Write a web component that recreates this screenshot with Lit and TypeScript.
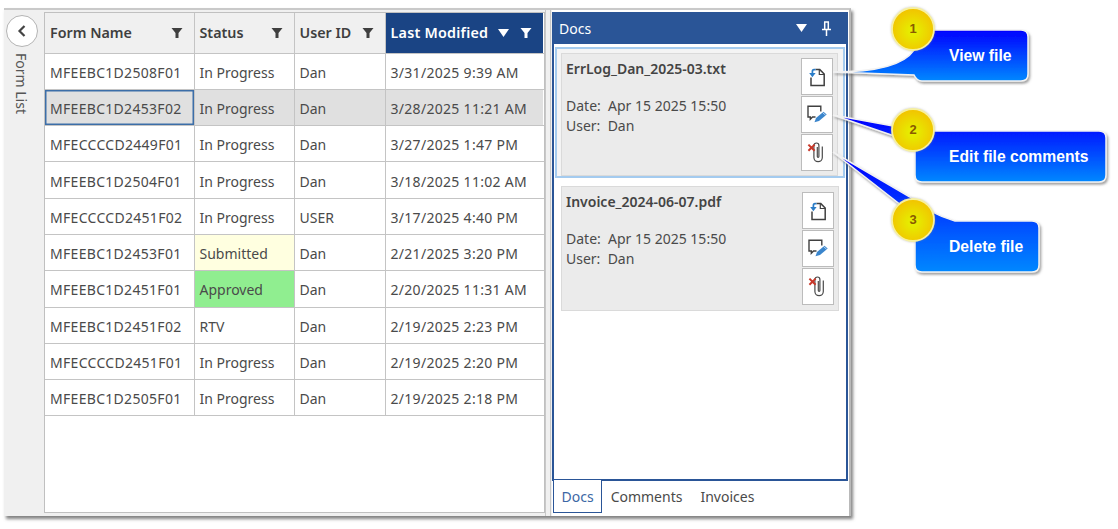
import { LitElement, html, css, svg } from "lit";
import { customElement } from "lit/decorators.js";

const rows = [
  ["MFEEBC1D2508F01", "In Progress", "Dan", "3/31/2025 9:39 AM"],
  ["MFEEBC1D2453F02", "In Progress", "Dan", "3/28/2025 11:21 AM"],
  ["MFECCCCD2449F01", "In Progress", "Dan", "3/27/2025 1:47 PM"],
  ["MFEEBC1D2504F01", "In Progress", "Dan", "3/18/2025 11:02 AM"],
  ["MFECCCCD2451F02", "In Progress", "USER", "3/17/2025 4:40 PM"],
  ["MFEEBC1D2453F01", "Submitted", "Dan", "2/21/2025 3:20 PM"],
  ["MFEEBC1D2451F01", "Approved", "Dan", "2/20/2025 11:31 AM"],
  ["MFEEBC1D2451F02", "RTV", "Dan", "2/19/2025 2:23 PM"],
  ["MFECCCCD2451F01", "In Progress", "Dan", "2/19/2025 2:20 PM"],
  ["MFEEBC1D2505F01", "In Progress", "Dan", "2/19/2025 2:18 PM"],
];

const funnel = html`<svg class="funnel" viewBox="0 0 12 12" width="12" height="12"><path d="M.5 1h11L7.5 6v5h-3V6z" fill="currentColor"/></svg>`;

const viewIcon = html`<svg viewBox="0 0 24 24" width="24" height="24" fill="none">
  <path d="M10.500 4.600h4.300l4.400 4.400v11.500H6v-8" stroke="#404040" stroke-width="1.500"/>
  <path d="M14.300 4.600V9.500h4.900" stroke="#404040" stroke-width="1.200"/>
  <path d="M10.500 4.700H9Q7.400 4.700 7.400 6.500v2" stroke="#2a7cc7" stroke-width="1.700"/>
  <path d="M4.200 8h6.400L7.400 12.300z" fill="#2a7cc7"/>
</svg>`;
const editIcon = html`<svg viewBox="0 0 24 24" width="24" height="24" fill="none">
  <path d="M10.500 14H7.500L5.300 16.300V14H3V3.300h12.800V8.500" stroke="#404040" stroke-width="1.400"/>
  <path d="M9.500 19.300L11 15L18.500 8.800L21.700 11.500L14 17.900z" fill="#3a85cc"/>
  <path d="M17.600 9.600l3.100 2.700" stroke="#d4e6f6" stroke-width=".8"/>
</svg>`;
const delIcon = html`<svg viewBox="0 0 24 24" width="24" height="24" fill="none">
  <path d="M17.300 5.500V16.500a4.200 4.200 0 0 1-8.400 0V4.500a2.500 2.500 0 0 1 5 0V15.500a.8.8 0 0 1-1.600 0V6" stroke="#4a4a4a" stroke-width="1.200"/>
  <path d="M3.400 3.600l6.200 6.200M9.600 3.600l-6.200 6.200" stroke="#c8382a" stroke-width="2"/>
</svg>`;

const cards = [
  { name: "ErrLog_Dan_2025-03.txt", sel: true },
  { name: "Invoice_2024-06-07.pdf", sel: false },
];

@customElement("app-root")
export class AppRoot extends LitElement {
  static styles = css`
    :host {
      display: block;
      position: relative;
      width: 1118px;
      height: 529px;
      overflow: hidden;
      background: #fff;
      font-family: "Noto Sans", sans-serif;
      font-size: 14px;
      color: #4a4a4a;
    }
    .window {
      margin: 8px 0 0 4px;
      width: 847px;
      height: 508px;
      box-sizing: border-box;
      display: flex;
      background: #f0f0f0;
      border-top: 2px solid #c9c9c9;
      border-right: 2px solid #b9b9b9;
      box-shadow: 2px 3px 3px rgba(90, 90, 90, 0.75);
    }
    .side {
      width: 40px;
      flex: none;
      display: flex;
      flex-direction: column;
      align-items: center;
      padding-top: 5px;
      box-sizing: border-box;
    }
    .back {
      width: 32px;
      height: 32px;
      box-sizing: border-box;
      margin-left: -4px;
      border-radius: 50%;
      border: 1.500px solid #b4b4b4;
      background: #fff;
      display: flex;
      align-items: center;
      justify-content: center;
    }
    .vert {
      writing-mode: vertical-rl;
      margin: 6px 0 0 -6px;
      font-size: 14px;
      color: #555;
      line-height: 18px;
    }
    .grid {
      width: 501px;
      flex: none;
      box-sizing: border-box;
      margin: 2px 0 3px;
      border: 1.500px solid #c0c0c0;
      background: #fff;
    }
    .row {
      display: grid;
      grid-template-columns: 149.500px 100px 91px 157.500px;
      height: 36.300px;
      box-sizing: border-box;
      border-bottom: 1.500px solid #c4c4c4;
    }
    .row.head {
      height: 40.500px;
    }
    .cell {
      display: flex;
      align-items: center;
      padding: 2px 0 0 5px;
      box-sizing: border-box;
      border-right: 1.500px solid #c4c4c4;
      white-space: nowrap;
    }
    .cell.num-text {
      letter-spacing: 0.3px;
    }
    .cell:last-child {
      border-right: none;
    }
    .head .cell {
      background: #f0f0f0;
      font-weight: 600;
      font-size: 14.300px;
      justify-content: space-between;
      padding: 0 11px 0 5px;
      color: #3f3f3f;
    }
    .head .cell.sorted {
      background: #1a4484;
      color: #fff;
      padding-right: 11px;
      letter-spacing: 0.25px;
    }
    .tools {
      display: flex;
      align-items: center;
      gap: 11px;
    }
    .sel .cell {
      background: #e0e0e0;
    }
    .sel .cell.focus {
      box-shadow: inset 0 0 0 1.500px #3c6ea8;
    }
    .submitted {
      background: #ffffe0;
    }
    .approved {
      background: #90ee90;
    }
    .split {
      width: 6px;
      flex: none;
      box-sizing: border-box;
      border-left: 1.500px solid #c8c8c8;
      border-right: 1.500px solid #c8c8c8;
      margin-right: 1px;
    }
    .panel {
      flex: 1;
      min-width: 0;
      background: #fff;
      display: flex;
      flex-direction: column;
      padding: 2px 1px 3px 0;
    }
    .dock {
      height: 469px;
      flex: none;
      box-sizing: border-box;
      border: 2px solid #2a5597;
      display: flex;
      flex-direction: column;
      background: #fff;
    }
    .title {
      height: 30px;
      flex: none;
      background: #2a5597;
      color: #fff;
      display: flex;
      align-items: center;
      justify-content: space-between;
      padding: 0 14px 2px 5px;
      box-sizing: border-box;
    }
    .title .right {
      display: flex;
      align-items: center;
      gap: 14px;
    }
    .card {
      margin: 3px 1px 8px 1px;
      padding: 4px 5px 0 4px;
      height: 131px;
      box-sizing: border-box;
      border: 2px solid #a4cbef;
      background: #f4f4f4;
    }
    .inner {
      height: 100%;
      box-sizing: border-box;
      background: #ebebeb;
      border: 1.500px solid #dadada;
      display: flex;
      justify-content: space-between;
      padding: 4px 4px 0 4px;
    }
    .card.plain {
      height: 125px;
      border: none;
      background: none;
      margin: 0 7px;
      padding: 0;
    }
    .plain .inner {
      padding-top: 5px;
    }
    .info {
      display: flex;
      flex-direction: column;
    }
    .sel .info {
      padding-top: 1px;
    }
    .plain .info {
      margin-top: -0.500px;
    }
    .fname {
      font-weight: 600;
      line-height: 20px;
      color: #444;
    }
    .meta {
      margin-top: 17px;
      line-height: 20px;
    }
    .btns {
      display: flex;
      flex-direction: column;
      gap: 1px;
    }
    .btn {
      width: 32px;
      height: 37px;
      box-sizing: border-box;
      background: #fff;
      border: 1.500px solid #bcbcbc;
      display: flex;
      align-items: center;
      justify-content: center;
    }
    .tabs {
      display: flex;
      align-items: stretch;
      height: 34px;
      margin-top: -1.500px;
    }
    .tab {
      display: flex;
      align-items: center;
      padding: 1px 8.500px 0;
      white-space: nowrap;
    }
    .tab:last-child {
      margin-left: 1px;
    }
    .tab.on {
      padding: 1px 7.500px 0;
      margin-left: 1px;
      color: #3c67a5;
      background: #fff;
      border: 1.500px solid #2a5597;
      border-top: none;
    }
    .overlay {
      position: absolute;
      left: 0;
      top: 0;
      pointer-events: none;
    }
    .co {
      position: absolute;
      left: 949px;
      font: bold 15.700px "Liberation Sans", sans-serif;
      color: #fff;
      line-height: 16px;
      white-space: nowrap;
    }
    .num {
      position: absolute;
      width: 40px;
      left: 893px;
      text-align: center;
      font: bold 13px "Liberation Sans", sans-serif;
      color: #8a5a00;
      line-height: 14px;
    }
  `;

  private callout(d: string, id: string) {
    return svg`<path d=${d} fill="url(#${id})" stroke="#f2f2f2" stroke-width="1.500" filter="url(#sh)"/>`;
  }
  private badge(cy: number) {
    return svg`<circle cx="913" cy=${cy} r="21" fill="url(#gold)" stroke="#f6f0a0" stroke-width="1.800" filter="url(#sh2)"/>`;
  }

  render() {
    return html`
      <div class="window">
        <div class="side">
          <div class="back">
            <svg width="12" height="14" viewBox="0 0 12 14"><path d="M8.500 2L3.500 7l5 5" fill="none" stroke="#444" stroke-width="2.200"/></svg>
          </div>
          <div class="vert">Form List</div>
        </div>
        <div class="grid">
          <div class="row head">
            <div class="cell">Form Name ${funnel}</div>
            <div class="cell">Status ${funnel}</div>
            <div class="cell">User ID ${funnel}</div>
            <div class="cell sorted">Last Modified
              <span class="tools">
                <svg width="11" height="8" viewBox="0 0 11 8"><path d="M0 0h11L5.500 8z" fill="#fff"/></svg>
                ${funnel}
              </span>
            </div>
          </div>
          ${rows.map(
            (r, i) => html`<div class="row ${i === 1 ? "sel" : ""}">
              <div class="cell num-text ${i === 1 ? "focus" : ""}">${r[0]}</div>
              <div class="cell ${r[1] === "Submitted" ? "submitted" : r[1] === "Approved" ? "approved" : ""}">${r[1]}</div>
              <div class="cell">${r[2]}</div>
              <div class="cell num-text">${r[3]}</div>
            </div>`
          )}
        </div>
        <div class="split"></div>
        <div class="panel">
          <div class="dock">
            <div class="title">
              <span>Docs</span>
              <span class="right">
                <svg width="11" height="8" viewBox="0 0 11 8"><path d="M0 0h11L5.500 8z" fill="#fff"/></svg>
                <svg width="11" height="15" viewBox="0 0 11 15"><path d="M3 1h5M3.700 1v7M7.300 1v7M1 8.500h9M5.500 9v6" fill="none" stroke="#fff" stroke-width="1.500"/></svg>
              </span>
            </div>
            ${cards.map(
              (c) => html`<div class="card ${c.sel ? "sel" : "plain"}">
                <div class="inner">
                  <div class="info">
                    <div class="fname">${c.name}</div>
                    <div class="meta">Date:&nbsp; Apr 15 2025 15:50<br />User:&nbsp; Dan</div>
                  </div>
                  <div class="btns">
                    <div class="btn">${viewIcon}</div>
                    <div class="btn">${editIcon}</div>
                    <div class="btn">${delIcon}</div>
                  </div>
                </div>
              </div>`
            )}
          </div>
          <div class="tabs">
            <div class="tab on">Docs</div>
            <div class="tab">Comments</div>
            <div class="tab">Invoices</div>
          </div>
        </div>
      </div>

      <svg class="overlay" width="1118" height="529" viewBox="0 0 1118 529">
        <defs>
          <linearGradient id="b1" gradientUnits="userSpaceOnUse" x1="0" y1="30" x2="0" y2="81">
            <stop offset="0" stop-color="#0000ff"/><stop offset="1" stop-color="#0088ff"/>
          </linearGradient>
          <linearGradient id="b2" gradientUnits="userSpaceOnUse" x1="0" y1="120" x2="0" y2="182">
            <stop offset="0" stop-color="#0000ff"/><stop offset="1" stop-color="#0088ff"/>
          </linearGradient>
          <linearGradient id="b3" gradientUnits="userSpaceOnUse" x1="0" y1="160" x2="0" y2="272">
            <stop offset="0" stop-color="#0000ff"/><stop offset="1" stop-color="#0088ff"/>
          </linearGradient>
          <radialGradient id="gold" cx=".5" cy=".55" r=".55">
            <stop offset="0" stop-color="#e4f400"/><stop offset="1" stop-color="#f2c200"/>
          </radialGradient>
          <filter id="sh" x="-10%" y="-20%" width="125%" height="150%">
            <feDropShadow dx="1.500" dy="2" stdDeviation="1" flood-color="#555" flood-opacity=".55"/>
          </filter>
          <filter id="sh2" x="-20%" y="-20%" width="140%" height="140%">
            <feDropShadow dx="0" dy="0" stdDeviation=".8" flood-color="#888" flood-opacity=".5"/>
          </filter>
        </defs>
        ${this.callout("M833 72C868 72 902 68 914 50V30H1021Q1028 30 1028 37V74Q1028 81 1021 81H922Q917 81 914 75Z", "b1")}
        ${this.callout("M833 115L915 130V131H1099Q1106 131 1106 138V175Q1106 182 1099 182H922Q915 182 915 175V143Z", "b2")}
        ${this.callout("M833 152L910 197Q930 214 955 221H1032Q1039 221 1039 228V265Q1039 272 1032 272H922Q915 272 915 265V216Z", "b3")}
        ${this.badge(29)} ${this.badge(130)} ${this.badge(220)}
      </svg>
      <div class="co" style="top:48px">View file</div>
      <div class="co" style="top:149px">Edit file comments</div>
      <div class="co" style="top:239px">Delete file</div>
      <div class="num" style="top:22px">1</div>
      <div class="num" style="top:123px">2</div>
      <div class="num" style="top:213px">3</div>
    `;
  }
}
